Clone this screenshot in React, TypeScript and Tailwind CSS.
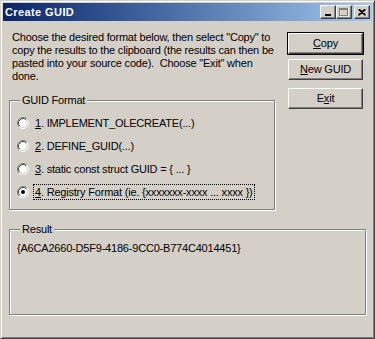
import React from "react";

const font = { fontFamily: '"Liberation Sans", Arial, sans-serif' };

function Radio({ checked }: { checked?: boolean }) {
  return (
    <svg width="12" height="12" viewBox="0 0 12 12" className="shrink-0">
      <circle cx="6" cy="6" r="5" fill="#fff" />
      <path d="M2.11 9.89 A5.5 5.5 0 0 1 9.89 2.11" fill="none" stroke="#808080" strokeWidth="1" />
      <path d="M9.89 2.11 A5.5 5.5 0 0 1 2.11 9.89" fill="none" stroke="#fff" strokeWidth="1" />
      <path d="M2.82 9.18 A4.5 4.5 0 0 1 9.18 2.82" fill="none" stroke="#404040" strokeWidth="1" />
      <path d="M9.18 2.82 A4.5 4.5 0 0 1 2.82 9.18" fill="none" stroke="#d4d0c8" strokeWidth="1" />
      {checked && <circle cx="6" cy="6" r="2" fill="#000" />}
    </svg>
  );
}

function TitleBtn({ children }: { children: React.ReactNode }) {
  return (
    <div className="w-[16px] h-[14px] bg-[#d4d0c8] border border-t-white border-l-white border-r-[#404040] border-b-[#404040] shadow-[inset_-1px_-1px_0_#808080] flex items-center justify-center">
      {children}
    </div>
  );
}

function Btn({ children, def }: { children: React.ReactNode; def?: boolean }) {
  return (
    <div className={def ? "border border-black" : "border border-transparent"}>
      <div className="h-[21px] bg-[#d4d0c8] border border-t-white border-l-white border-r-[#404040] border-b-[#404040] shadow-[inset_-1px_-1px_0_#808080] flex items-center justify-center text-[11px] tracking-[-0.2px] text-black">
        {children}
      </div>
    </div>
  );
}

function GroupBox({ label, className, children }: { label: string; className: string; children: React.ReactNode }) {
  return (
    <div className={"relative border border-[#808080] shadow-[1px_1px_0_#fff,inset_1px_1px_0_#fff] " + className}>
      <div className="absolute left-[10px] top-[-7px] bg-[#d4d0c8] px-[2px] text-[11px] tracking-[-0.2px] leading-[13px] text-black">
        {label}
      </div>
      {children}
    </div>
  );
}

function RadioRow({ n, text, checked }: { n: string; text: string; checked?: boolean }) {
  return (
    <div className="h-[23px] flex items-center pl-[7px]">
      <Radio checked={checked} />
      <span
        className={
          "ml-[4px] px-[1px] text-[11px] tracking-[-0.2px] leading-[14px] text-black border border-dotted " +
          (checked ? "border-black" : "border-transparent")
        }
      >
        <span className="underline">{n}</span>. {text}
      </span>
    </div>
  );
}

export default function App() {
  return (
    <div
      className="w-[375px] h-[339px] bg-[#d4d0c8] border border-t-[#d4d0c8] border-l-[#d4d0c8] border-r-[#404040] border-b-[#404040] shadow-[inset_1px_1px_0_#fff,inset_-1px_-1px_0_#808080] p-[2px] flex flex-col"
      style={font}
    >
      <div className="h-[18px] bg-gradient-to-r from-[#0a246a] to-[#a6caf0] flex items-center pl-[2px] pr-[2px]">
        <span className="text-white font-bold text-[11px] tracking-[0.4px] leading-[14px] flex-1">Create GUID</span>
        <div className="flex items-center">
          <TitleBtn>
            <svg width="8" height="7" viewBox="0 0 8 7">
              <rect x="1" y="5" width="6" height="2" fill="#000" />
            </svg>
          </TitleBtn>
          <TitleBtn>
            <svg width="10" height="9" viewBox="0 0 10 9">
              <rect x="1" y="1" width="9" height="8" fill="none" stroke="#fff" strokeWidth="1" />
              <rect x="0" y="0" width="9" height="2" fill="#808080" />
              <rect x="0" y="0" width="1" height="8" fill="#808080" />
              <rect x="8" y="0" width="1" height="8" fill="#808080" />
              <rect x="0" y="7" width="9" height="1" fill="#808080" />
            </svg>
          </TitleBtn>
          <div className="w-[2px]" />
          <TitleBtn>
            <svg width="8" height="7" viewBox="0 0 8 7">
              <path d="M0.5 0.5 L7.5 6.5 M1.5 0.5 L7.5 5.7 M7.5 0.5 L0.5 6.5 M6.5 0.5 L0.5 5.7" stroke="#000" strokeWidth="1.1" />
            </svg>
          </TitleBtn>
        </div>
      </div>

      <div className="flex-1 px-[6px]">
        <div className="flex">
          <div className="w-[266px]">
            <p className="mt-[10px] ml-[3px] text-[11px] tracking-[-0.2px] leading-[13px] text-black whitespace-pre">
              {'Choose the desired format below, then select "Copy" to\ncopy the results to the clipboard (the results can then be\npasted into your source code).  Choose "Exit" when\ndone.'}
            </p>
            <GroupBox label="GUID Format" className="mt-[17px] h-[110px] pt-[10px]">
              <RadioRow n="1" text="IMPLEMENT_OLECREATE(...)" />
              <RadioRow n="2" text="DEFINE_GUID(...)" />
              <RadioRow n="3" text="static const struct GUID = { ... }" />
              <RadioRow n="4" text="Registry Format (ie. {xxxxxxx-xxxx ... xxxx })" checked />
            </GroupBox>
          </div>
          <div className="ml-[12px] w-[77px] mt-[11px] flex flex-col gap-[3px]">
            <Btn def>
              <span><span className="underline">C</span>opy</span>
            </Btn>
            <Btn>
              <span><span className="underline">N</span>ew GUID</span>
            </Btn>
            <div className="mt-[3px]">
              <Btn>
                <span>E<span className="underline">x</span>it</span>
              </Btn>
            </div>
          </div>
        </div>
        <GroupBox label="Result" className="mt-[19px] w-[357px] h-[86px] pt-[12px] pl-[7px]">
          <div className="text-[11px] tracking-[-0.2px] leading-[13px] text-black">{"{A6CA2660-D5F9-4186-9CC0-B774C4014451}"}</div>
        </GroupBox>
      </div>
    </div>
  );
}
